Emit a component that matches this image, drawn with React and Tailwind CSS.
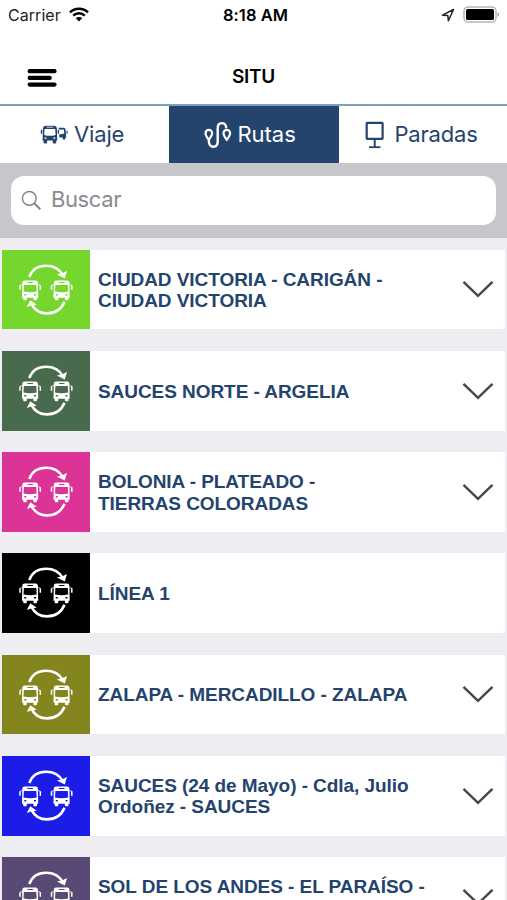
const routes = [
    { name: ['CIUDAD VICTORIA - CARIGÁN -', 'CIUDAD VICTORIA'], color: 'bg-[#75d62e]', expandable: true },
    { name: ['SAUCES NORTE - ARGELIA'], color: 'bg-[#486b4d]', expandable: true },
    { name: ['BOLONIA - PLATEADO -', 'TIERRAS COLORADAS'], color: 'bg-[#dc3397]', expandable: true },
    { name: ['LÍNEA 1'], color: 'bg-black', expandable: false },
    { name: ['ZALAPA - MERCADILLO - ZALAPA'], color: 'bg-[#85851f]', expandable: true },
    { name: ['SAUCES (24 de Mayo) - Cdla, Julio', 'Ordoñez - SAUCES'], color: 'bg-[#1c1ce8]', expandable: true },
    { name: ['SOL DE LOS ANDES - EL PARAÍSO -', '\u00a0'], color: 'bg-[#584a75]', expandable: true },
]

function Bus({ x }) {
    return (
        <g transform={`translate(${x} 0)`}>
            <path
                fillRule="evenodd"
                fill="white"
                d="M22.500 30.500h11.200q2 0 2.200 2l.3 15.200h-1.200v1.500q0 1-1 1h-1.600q-1 0-1-1v-1.500h-6.600v1.500q0 1-1 1h-1.600q-1 0-1-1v-1.500H20l.3-15.200q.2-2 2.200-2zM25.400 31.900v1.100h5.600v-1.100zM21.900 34.900l-.4 6.700q3.300.6 6.600.6t6.600-.6l-.4-6.700zM22.300 44h2v1.600h-2zM32 44h2v1.600h-2z"
            />
            <path d="M18 35.300v4.400M38.300 35.300v4.400" stroke="white" strokeWidth="1.500" />
            <path d="M18 35.300l2.500-.8M38.300 35.300l-2.500-.8" stroke="white" strokeWidth=".8" />
        </g>
    )
}

function RouteIcon() {
    return (
        <svg viewBox="0 0 88 80" className="w-[88px] h-[80px]" fill="none">
            <path d="M27.300 27C30 19.500 36.500 15.700 44 15.700c7.500 0 13.500 3.300 16.700 9.300" stroke="white" strokeWidth="2.600" />
            <path d="M54.800 24.500l5-1.100 5.200-2.300-2.200 7.400z" fill="white" />
            <path d="M62.500 51.800C59.500 59 53 63.400 45 63.400c-7 0-12.500-3.600-15.500-9.600" stroke="white" strokeWidth="2.600" />
            <path d="M28.300 50.200l-3.500 6.900 5-1.800 5-.5z" fill="white" />
            <Bus x={0} />
            <Bus x={31.500} />
        </svg>
    )
}

function StatusBar() {
    return (
        <div className="grid grid-cols-3 items-center h-[29px] px-2 text-black">
            <div className="flex items-center gap-[8px] text-[16px] tracking-[0.050px]">
                <span className="w-[53px] text-[#222]">Carrier</span>
                <svg viewBox="0 0 20 15" className="w-[20px] h-[15px] shrink-0" fill="none" stroke="black" strokeWidth="2.500">
                    <path d="M1 5.300C6 .4 14 .4 19 5.300" />
                    <path d="M4.200 8.600c3.400-3.200 8.200-3.200 11.600 0" />
                    <path d="M6.700 11.100c2-1.600 4.600-1.600 6.600 0L10 14.400z" fill="black" stroke="none" />
                </svg>
            </div>
            <div className="text-center text-[16.500px] font-semibold tracking-[0.050px] pl-[4px] pt-px">8:18 AM</div>
            <div className="flex items-center justify-end gap-[8px] -mr-[1px]">
                <svg viewBox="0 0 14 14" className="w-[14px] h-[14px]" fill="none" stroke="#222" strokeWidth="1.500" strokeLinejoin="round">
                    <path d="M12.500 1.500L1.500 7.200l5.300.4.600 5.200z" />
                </svg>
                <svg viewBox="0 0 37 17" className="w-[37px] h-[17px]">
                    <rect x="1" y="1" width="32" height="15" rx="4.200" fill="white" stroke="#b5b5b5" strokeWidth="1.500" />
                    <rect x="3" y="3" width="28" height="11" rx="1.500" fill="black" />
                    <path d="M34.500 6v5c2.200-.7 2.200-4.300 0-5z" fill="#a5a5a5" />
                </svg>
            </div>
        </div>
    )
}

function BusesIcon() {
    return (
        <svg viewBox="0 0 28 20" className="w-[28px] h-[20px]" fill="none">
            <path
                fillRule="evenodd"
                fill="#25446d"
                d="M5.500.7h8.800q2.400 0 2.600 2.500l.3 12.400h-.9v1.800q0 1.100-1.100 1.100h-1.400q-1.100 0-1.100-1.100v-1.800H7.100v1.800q0 1.100-1.100 1.100H4.600q-1.100 0-1.100-1.100v-1.800h-.9L2.900 3.200Q3.100.7 5.500.7zM6.700 1.800v.8h6.400v-.8zM4.600 3.900l-.4 6q2.900.9 5.700.9t5.700-.9l-.4-6zM4.500 12.400v1.300h2v-1.300zM13.300 12.400v1.300h2v-1.300z"
            />
            <path d="M1.500 4.800v4M18.400 4.800v4" stroke="#25446d" strokeWidth="1.400" />
            <path
                fillRule="evenodd"
                fill="#25446d"
                d="M18.300 2.800h5.500q1.500 0 1.800 1.500l.6 8.200h-.8v1.200q0 .9-.9.900h-.9q-.9 0-.9-.9v-1.200h-3.400V9.100q2.600.2 4.900-.6l-.4-3.900h-4.700z"
            />
            <path d="M27.100 5.700v3" stroke="#25446d" strokeWidth="1.200" />
        </svg>
    )
}

function PathIcon() {
    return (
        <svg viewBox="0 0 28 28" className="w-[28px] h-[28px]" fill="none" stroke="white" strokeWidth="2.200" strokeLinecap="round" strokeLinejoin="round">
            <path d="M4.800 18.800c-2.300-3.100-3.300-4.800-3.300-6.600a3.300 3.300 0 0 1 6.600 0c0 1.800-1 3.500-3.300 6.600z" />
            <path d="M22.800 18.800c-2.300-3.100-3.300-4.800-3.300-6.600a3.300 3.300 0 0 1 6.600 0c0 1.800-1 3.500-3.300 6.600z" />
            <path d="M4.800 19.800c0 3.700 2 5.900 4.600 5.900s4.300-1.900 4.300-4.900V7.300c0-3.100 1.400-5.200 4.100-5.200 2.400 0 4 1.600 4.400 4.200" strokeWidth="2.400" />
        </svg>
    )
}

function StopIcon() {
    return (
        <svg viewBox="0 0 20 28" className="w-[20px] h-[28px]" fill="none" stroke="#25446d">
            <rect x="1.700" y="1.900" width="15.900" height="15.900" rx=".5" strokeWidth="2.200" />
            <path d="M9.700 18v8" strokeWidth="2" />
            <path d="M4 26.200h11.400" strokeWidth="1.800" />
        </svg>
    )
}

export default function App() {
    return (
        <div className="w-full h-[900px] overflow-hidden flex flex-col bg-[#eeedf2] font-['Inter',sans-serif]">
            <div className="bg-white shrink-0">
                <StatusBar />
                <header className="grid grid-cols-3 items-center h-[75px] pt-[22px] px-[27px]">
                    <svg viewBox="0 0 30 20" className="w-[30px] h-[20px]" stroke="black" strokeWidth="4.300" strokeLinecap="round">
                        <path d="M2.700 3.200h24.800M2.700 9.900h20M2.700 16.600h24.800" />
                    </svg>
                    <h1 className="text-center text-[19px] font-semibold tracking-[-0.300px] text-black">SITU</h1>
                </header>
            </div>

            {/* Tabs */}
            <nav className="grid grid-cols-[168.500px_170px_1fr] h-[59px] shrink-0 border-t-2 border-[#7f9fbc] bg-white text-[#25446d] text-[22px]">
                <button className="flex items-center gap-[6px] pl-[40px]">
                    <BusesIcon />
                    <span className="tracking-[-0.150px]">Viaje</span>
                </button>
                <button className="flex items-center gap-[6px] pl-[35px] bg-[#25446d] text-white">
                    <PathIcon />
                    <span className="tracking-[-0.050px]">Rutas</span>
                </button>
                <button className="flex items-center gap-[10px] pl-[26px]">
                    <StopIcon />
                    <span className="tracking-[-0.200px]">Paradas</span>
                </button>
            </nav>

            {/* Search */}
            <div className="h-[75px] shrink-0 bg-[#c7c6cb] pt-[13px] pl-[11px] pr-[11px]">
                <div className="flex items-center gap-[9px] h-[48.500px] rounded-[13px] bg-white pl-[10px] text-[22px] text-[#8b8b8f]">
                    <svg viewBox="0 0 21 21" className="w-[21px] h-[21px]" fill="none" stroke="#858589">
                        <circle cx="8.300" cy="8.300" r="6.900" strokeWidth="1.500" />
                        <path d="M13.300 13.300l6 6" strokeWidth="2" />
                    </svg>
                    <span className="tracking-[-0.400px] pb-px">Buscar</span>
                </div>
            </div>

            {/* Route list */}
            <ul className="flex flex-col gap-[21.500px] pt-[11.500px] px-[2px]">
                {routes.map((route, index) => (
                    <li key={index} className="flex items-center h-[79.750px] shrink-0 bg-white">
                        <div className={`w-[88px] h-full shrink-0 overflow-hidden ${route.color}`}>
                            <RouteIcon />
                        </div>
                        <div className="flex-1 pl-[8px] pt-[1.500px] font-['Liberation_Sans',sans-serif] font-bold text-[19px] leading-[21.500px] tracking-[-0.060px] text-[#25446d] whitespace-nowrap">
                            {route.name.map((line) => (
                                <p key={line}>{line}</p>
                            ))}
                        </div>
                        {route.expandable && (
                            <svg viewBox="0 0 32 18" className="w-[32px] h-[18px] mr-[11px] shrink-0" fill="none" stroke="#484848" strokeWidth="2.500">
                                <path d="M1.500 1.800L16 15.800 30.500 1.800" />
                            </svg>
                        )}
                    </li>
                ))}
            </ul>
        </div>
    )
}
